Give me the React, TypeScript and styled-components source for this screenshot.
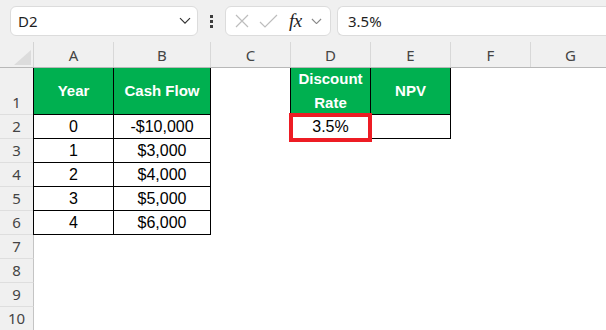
import styled, { createGlobalStyle } from 'styled-components'

const GlobalStyle = createGlobalStyle`
  html, body {
    margin: 0;
    padding: 0;
    background: #ffffff;
    overflow: hidden;
  }
  body {
    width: 606px;
    height: 330px;
    font-family: 'Noto Sans', 'Open Sans', sans-serif;
  }
`

const COLS = '34px 80px 97px 80px 80px 80px 80px 80px'

const Toolbar = styled.div`
  display: flex;
  align-items: center;
  height: 42px;
  padding-left: 10px;
  background: #f0f0f0;
`

const Box = styled.div`
  height: 30px;
  box-sizing: border-box;
  display: flex;
  align-items: center;
  background: #ffffff;
  border: 1px solid #dcdcdc;
  border-radius: 6px;
  color: #1f1f1f;
  font-size: 15px;
`

const NameBox = styled(Box)`
  width: 188px;
  justify-content: space-between;
  padding: 0 6px 0 7px;
`

const Dots = styled.div`
  width: 27px;
  display: flex;
  flex-direction: column;
  align-items: center;
  gap: 2px;
  & span {
    width: 3px;
    height: 3px;
    background: #3c3c3c;
  }
`

const FxButtons = styled(Box)`
  width: 106px;
  padding: 0 4px 0 8px;
  gap: 9px;
`

const FxLabel = styled.span`
  font-family: 'Liberation Serif', 'DejaVu Serif', serif;
  font-style: italic;
  font-size: 19px;
  color: #222;
  margin-left: 2px;
  letter-spacing: -0.5px;
`

const FormulaInput = styled(Box)`
  flex: 1;
  margin-left: 6px;
  padding-left: 10px;
  border-right: none;
  border-radius: 6px 0 0 6px;
`

const Row = styled.div<{ $h: number }>`
  display: grid;
  grid-template-columns: ${COLS};
  grid-template-rows: ${(p) => p.$h}px;
  height: ${(p) => p.$h}px;
`

const HeaderRow = styled(Row)`
  background: #f0f0f0;
  border-bottom: 1px solid #b8b8b8;
  box-sizing: border-box;
  grid-template-rows: 25px;
`

const Corner = styled.div`
  position: relative;
  border-right: 1px solid #d4d4d4;
  & svg {
    position: absolute;
    right: 2px;
    bottom: 2px;
  }
`

const ColLetter = styled.div`
  display: flex;
  align-items: center;
  justify-content: center;
  border-right: 1px solid #d8d8d8;
  color: #444;
  font-size: 15px;
`

const RowNum = styled.div`
  display: flex;
  align-items: flex-end;
  justify-content: center;
  padding-bottom: 1px;
  box-sizing: border-box;
  background: #f0f0f0;
  border-right: 1px solid #c4c4c4;
  border-bottom: 1px solid #dedede;
  color: #444;
  font-size: 15px;
  line-height: 22px;
`

const Cell = styled.div<{ $border?: boolean; $left?: boolean; $head?: boolean }>`
  position: relative;
  box-sizing: border-box;
  display: flex;
  align-items: center;
  justify-content: center;
  text-align: center;
  min-height: 0;
  font-family: 'Liberation Sans', Arial, sans-serif;
  font-size: ${(p) => (p.$head ? 15 : 16)}px;
  font-weight: ${(p) => (p.$head ? 700 : 400)};
  line-height: ${(p) => (p.$head ? 24 : 22)}px;
  color: ${(p) => (p.$head ? '#ffffff' : '#000000')};
  background: ${(p) => (p.$head ? '#00b050' : '#ffffff')};
  border-right: ${(p) => (p.$border ? '1px solid #000' : 'none')};
  border-bottom: ${(p) => (p.$border ? '1px solid #000' : 'none')};
  border-left: ${(p) => (p.$left ? '1px solid #000' : 'none')};
  margin-left: ${(p) => (p.$left ? '-1px' : '0')};
`

const Selection = styled.div`
  position: absolute;
  z-index: 2;
  left: -2px;
  right: -2px;
  top: -2px;
  bottom: -4px;
  border: 4px solid #ed1c24;
  pointer-events: none;
`

type CellData = { text?: string; head?: boolean; sel?: boolean } | null

const letters = ['A', 'B', 'C', 'D', 'E', 'F', 'G']

const rows: { h: number; cells: CellData[] }[] = [
  {
    h: 47,
    cells: [
      { text: 'Year', head: true },
      { text: 'Cash Flow', head: true },
      null,
      { text: 'Discount Rate', head: true },
      { text: 'NPV', head: true },
      null,
      null,
    ],
  },
  {
    h: 24,
    cells: [{ text: '0' }, { text: '-$10,000' }, null, { text: '3.5%', sel: true }, { text: '' }, null, null],
  },
  { h: 24, cells: [{ text: '1' }, { text: '$3,000' }, null, null, null, null, null] },
  { h: 24, cells: [{ text: '2' }, { text: '$4,000' }, null, null, null, null, null] },
  { h: 24, cells: [{ text: '3' }, { text: '$5,000' }, null, null, null, null, null] },
  { h: 24, cells: [{ text: '4' }, { text: '$6,000' }, null, null, null, null, null] },
  { h: 24, cells: [null, null, null, null, null, null, null] },
  { h: 24, cells: [null, null, null, null, null, null, null] },
  { h: 24, cells: [null, null, null, null, null, null, null] },
  { h: 24, cells: [null, null, null, null, null, null, null] },
]

function Chevron({ size = 12, color = '#333' }: { size?: number; color?: string }) {
  return (
    <svg width={size} height={size * 0.6} viewBox="0 0 12 7" fill="none">
      <path d="M1 1l5 5 5-5" stroke={color} strokeWidth="1.2" />
    </svg>
  )
}

export default function App() {
  return (
    <>
      <GlobalStyle />
      <Toolbar>
        <NameBox>
          <span>D2</span>
          <Chevron />
        </NameBox>
        <Dots>
          <span />
          <span />
          <span />
        </Dots>
        <FxButtons>
          <svg width="16" height="16" viewBox="0 0 16 16" fill="none">
            <path d="M2 2l12 12M14 2L2 14" stroke="#bdbdbd" strokeWidth="1.2" />
          </svg>
          <svg width="19" height="15" viewBox="0 0 19 15" fill="none">
            <path d="M1 8l5 5L18 1" stroke="#bdbdbd" strokeWidth="1.2" />
          </svg>
          <FxLabel>fx</FxLabel>
          <Chevron size={11} color="#888" />
        </FxButtons>
        <FormulaInput>3.5%</FormulaInput>
      </Toolbar>

      <HeaderRow $h={26}>
        <Corner>
          <svg width="17" height="15" viewBox="0 0 17 15">
            <path d="M17 0V15H0Z" fill="#dcdcdc" />
          </svg>
        </Corner>
        {letters.map((l) => (
          <ColLetter key={l}>{l}</ColLetter>
        ))}
      </HeaderRow>

      {rows.map((row, ri) => (
        <Row key={ri} $h={row.h}>
          <RowNum>{ri + 1}</RowNum>
          {row.cells.map((c, ci) => {
            const left = !!c && (ci === 0 || ci === 3)
            return (
              <Cell key={ci} $border={!!c} $left={left} $head={c?.head}>
                {c?.text}
                {c?.sel && <Selection />}
              </Cell>
            )
          })}
        </Row>
      ))}
    </>
  )
}
